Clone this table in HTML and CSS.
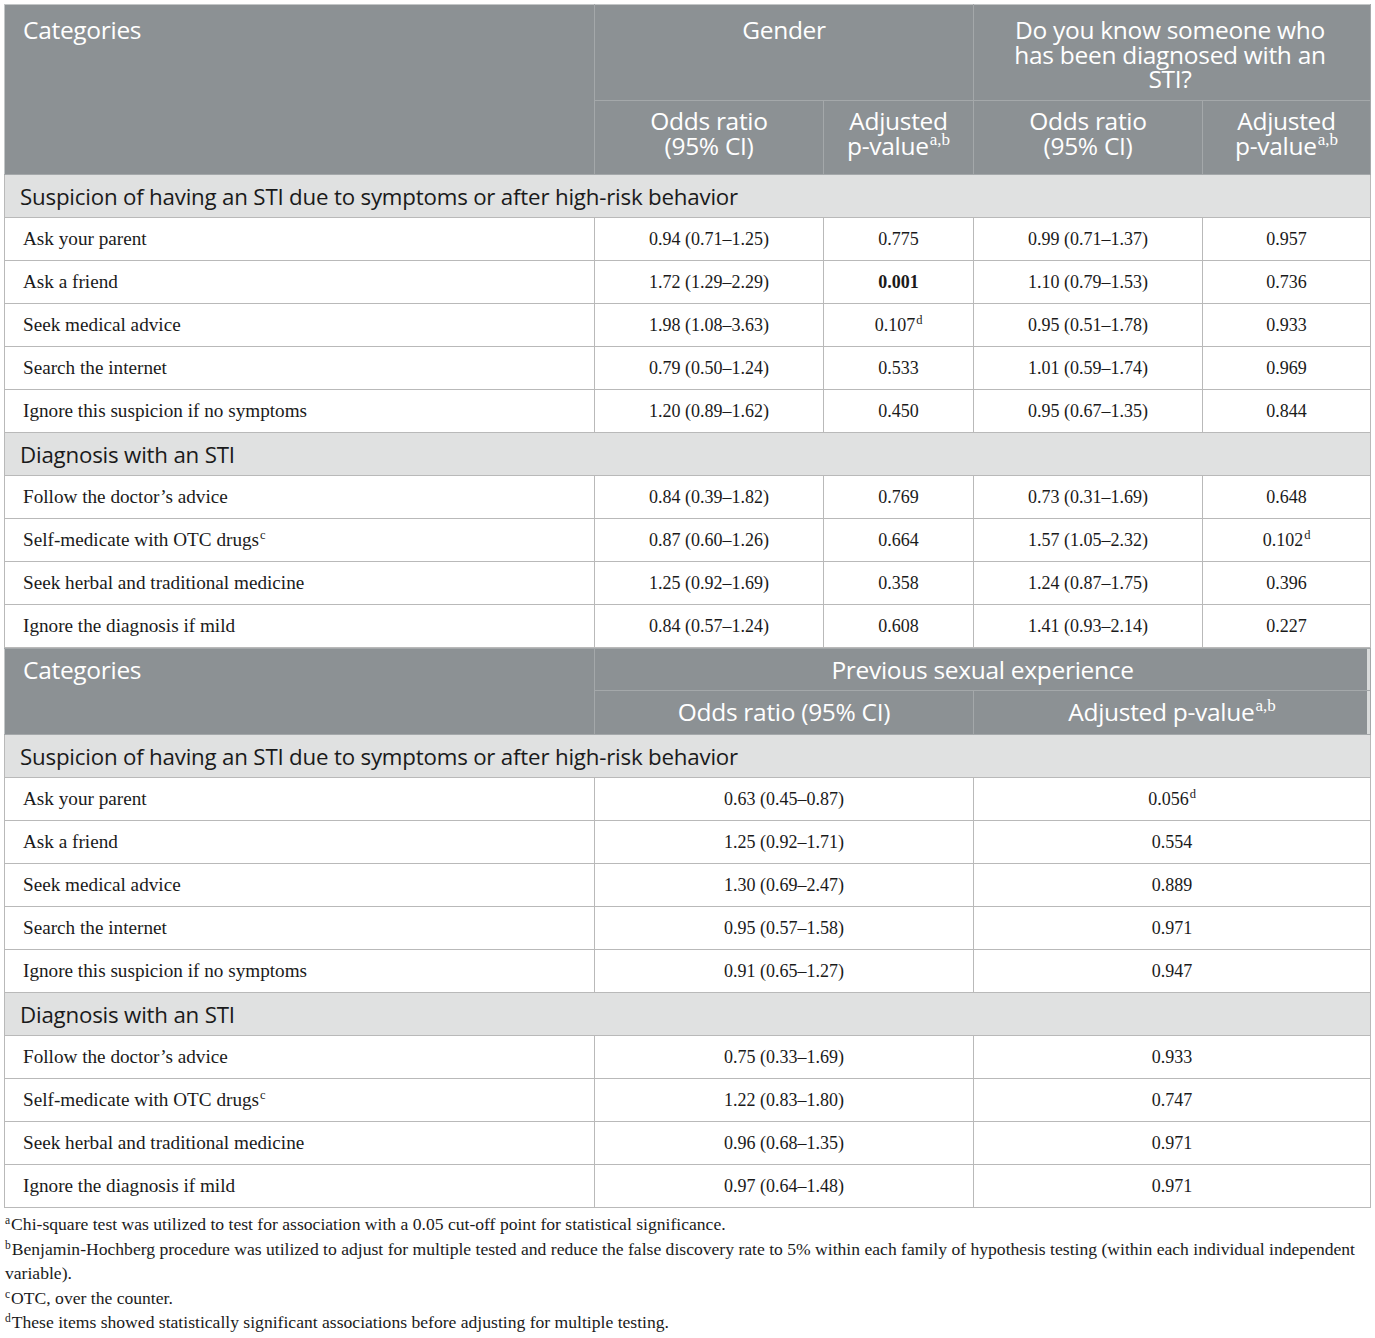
FILE: index.html
```html
<!DOCTYPE html>
<html lang="en">
<head>
<meta charset="utf-8">
<title>Table</title>
<link rel="stylesheet" href="styles.css">
</head>
<body>
<div class="wrap">
<table class="tbl t1">
  <colgroup>
    <col class="c1"><col class="c2"><col class="c3"><col class="c4"><col class="c5">
  </colgroup>
  <thead>
    <tr class="h1">
      <th rowspan="2" class="cat">Categories</th>
      <th colspan="2" class="top">Gender</th>
      <th colspan="2" class="top wide">Do you know someone who has been diagnosed with an STI?</th>
    </tr>
    <tr class="h2">
      <th>Odds ratio<br>(95% CI)</th>
      <th>Adjusted<br>p-value<sup>a,b</sup></th>
      <th>Odds ratio<br>(95% CI)</th>
      <th>Adjusted<br>p-value<sup>a,b</sup></th>
    </tr>
  </thead>
  <tbody>
    <tr class="sec"><td colspan="5">Suspicion of having an STI due to symptoms or after high-risk behavior</td></tr>
    <tr><td>Ask your parent</td><td>0.94 (0.71–1.25)</td><td>0.775</td><td>0.99 (0.71–1.37)</td><td>0.957</td></tr>
    <tr><td>Ask a friend</td><td>1.72 (1.29–2.29)</td><td><b>0.001</b></td><td>1.10 (0.79–1.53)</td><td>0.736</td></tr>
    <tr><td>Seek medical advice</td><td>1.98 (1.08–3.63)</td><td>0.107<sup>d</sup></td><td>0.95 (0.51–1.78)</td><td>0.933</td></tr>
    <tr><td>Search the internet</td><td>0.79 (0.50–1.24)</td><td>0.533</td><td>1.01 (0.59–1.74)</td><td>0.969</td></tr>
    <tr><td>Ignore this suspicion if no symptoms</td><td>1.20 (0.89–1.62)</td><td>0.450</td><td>0.95 (0.67–1.35)</td><td>0.844</td></tr>
    <tr class="sec"><td colspan="5">Diagnosis with an STI</td></tr>
    <tr><td>Follow the doctor’s advice</td><td>0.84 (0.39–1.82)</td><td>0.769</td><td>0.73 (0.31–1.69)</td><td>0.648</td></tr>
    <tr><td>Self-medicate with OTC drugs<sup>c</sup></td><td>0.87 (0.60–1.26)</td><td>0.664</td><td>1.57 (1.05–2.32)</td><td>0.102<sup>d</sup></td></tr>
    <tr><td>Seek herbal and traditional medicine</td><td>1.25 (0.92–1.69)</td><td>0.358</td><td>1.24 (0.87–1.75)</td><td>0.396</td></tr>
    <tr><td>Ignore the diagnosis if mild</td><td>0.84 (0.57–1.24)</td><td>0.608</td><td>1.41 (0.93–2.14)</td><td>0.227</td></tr>
  </tbody>
</table>
<table class="tbl t2">
  <colgroup>
    <col class="c1"><col class="d2"><col class="d3">
  </colgroup>
  <thead>
    <tr class="g1">
      <th rowspan="2" class="cat">Categories</th>
      <th colspan="2" class="top last">Previous sexual experience</th>
    </tr>
    <tr class="g2">
      <th>Odds ratio (95% CI)</th>
      <th class="last">Adjusted p-value<sup>a,b</sup></th>
    </tr>
  </thead>
  <tbody>
    <tr class="sec"><td colspan="3">Suspicion of having an STI due to symptoms or after high-risk behavior</td></tr>
    <tr><td>Ask your parent</td><td>0.63 (0.45–0.87)</td><td>0.056<sup>d</sup></td></tr>
    <tr><td>Ask a friend</td><td>1.25 (0.92–1.71)</td><td>0.554</td></tr>
    <tr><td>Seek medical advice</td><td>1.30 (0.69–2.47)</td><td>0.889</td></tr>
    <tr><td>Search the internet</td><td>0.95 (0.57–1.58)</td><td>0.971</td></tr>
    <tr><td>Ignore this suspicion if no symptoms</td><td>0.91 (0.65–1.27)</td><td>0.947</td></tr>
    <tr class="sec"><td colspan="3">Diagnosis with an STI</td></tr>
    <tr><td>Follow the doctor’s advice</td><td>0.75 (0.33–1.69)</td><td>0.933</td></tr>
    <tr><td>Self-medicate with OTC drugs<sup>c</sup></td><td>1.22 (0.83–1.80)</td><td>0.747</td></tr>
    <tr><td>Seek herbal and traditional medicine</td><td>0.96 (0.68–1.35)</td><td>0.971</td></tr>
    <tr><td>Ignore the diagnosis if mild</td><td>0.97 (0.64–1.48)</td><td>0.971</td></tr>
  </tbody>
</table>
<div class="notes">
  <p><sup>a</sup>Chi-square test was utilized to test for association with a 0.05 cut-off point for statistical significance.</p>
  <p><sup>b</sup>Benjamin-Hochberg procedure was utilized to adjust for multiple tested and reduce the false discovery rate to 5% within each family of hypothesis testing (within each individual independent variable).</p>
  <p><sup>c</sup>OTC, over the counter.</p>
  <p><sup>d</sup>These items showed statistically significant associations before adjusting for multiple testing.</p>
</div>
</div>
</body>
</html>
```
FILE: styles.css
```css
html, body {
  margin: 0;
  padding: 0;
  background: #ffffff;
}
.wrap {
  padding: 4px 5px 0 4px;
  width: 1366px;
}
.tbl {
  border-collapse: collapse;
  width: 1366px;
  table-layout: fixed;
  font-family: "Liberation Serif", "Times New Roman", serif;
  font-size: 18px;
  color: #1a1a1a;
}
.c1 { width: 590px; }
.c2 { width: 229px; }
.c3 { width: 150px; }
.c4 { width: 229px; }
.c5 { width: 168px; }
.d2 { width: 379px; }
.d3 { width: 397px; }
.tbl th {
  background: #8c9194;
  color: #ffffff;
  font-family: "Open Sans", "Noto Sans", sans-serif;
  font-weight: 400;
  font-size: 24.5px;
  line-height: 24.5px;
  text-align: center;
  vertical-align: top;
  border: 1px solid #a4a8aa;
  padding: 0 18px;
  letter-spacing: -0.3px;
}
.tbl th.wide {
  padding: 0 26px 0 22px;
}
.tbl th sup {
  font-family: "Liberation Serif", serif;
  font-size: 17px;
  line-height: 0;
  vertical-align: 10px;
  letter-spacing: 0;
  margin-left: 1px;
}
.tbl th.cat {
  text-align: left;
  padding-left: 18px;
  padding-top: 13px;
  border-left-color: #c3c6c7;
}
.t1 .h1 { height: 96px; }
.t1 .h1 th.top { padding-top: 13px; }
.t1 .h2 { height: 74px; }
.t1 .h2 th { padding-top: 8px; }
.t1 thead tr:first-child th { border-top-color: #c3c6c7; }
.t2 .g1 { height: 42px; }
.t2 .g1 th { padding-top: 9px; }
.t2 .g1 th.cat { padding-top: 9px; }
.t2 .g2 { height: 44px; }
.t2 .g2 th { padding-top: 9px; }
.t2 th.last { box-shadow: inset -3px 0 0 #d9dbdb; }
.tbl td {
  border: 1px solid #b9b9b9;
  text-align: center;
  vertical-align: middle;
  height: 42px;
  padding: 0 10px;
}
.tbl td:first-child {
  text-align: left;
  padding-left: 18px;
  font-size: 19.2px;
}
.tbl td sup {
  font-size: 12.5px;
  line-height: 0;
  vertical-align: 7px;
  margin-left: 1px;
}
.tbl td b { font-weight: 700; }
.tbl tr.sec td {
  background: #e0e1e1;
  font-family: "Open Sans", "Noto Sans", sans-serif;
  font-size: 22.3px;
  letter-spacing: -0.2px;
  color: #1a1a1a;
  height: 42px;
  padding-left: 15px;
  text-align: left;
}
.notes {
  font-family: "Liberation Serif", "Times New Roman", serif;
  font-size: 17.6px;
  color: #1a1a1a;
  margin-top: 4px;
  padding-left: 1px;
  line-height: 24.5px;
}
.notes p {
  margin: 0;
}
.notes sup {
  font-size: 11.5px;
  line-height: 0;
  vertical-align: 6px;
  margin-right: 1px;
}
```
